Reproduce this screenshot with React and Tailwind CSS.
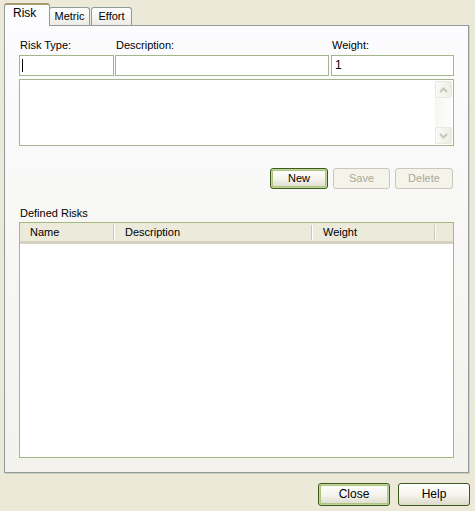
import React from "react";

function Tab({ label, active }) {
  if (active) {
    return (
      <div className="relative z-10 -mb-px flex h-[23px] w-[46px] items-start justify-start rounded-t-[3px] border-x border-t-2 border-x-[#919b9c] border-t-[#a49a6a] bg-[#fcfcfe] pl-[8px] pt-[2px] text-[12px]">
        {label}
      </div>
    );
  }
  return (
    <div className="flex h-[18px] w-[41px] items-center justify-center rounded-t-[3px] border-x border-t border-[#919b9c] bg-gradient-to-b from-[#ffffff] to-[#ecebe6] pb-px">
      {label}
    </div>
  );
}

function Button({ children, isDefault, disabled, className = "" }) {
  if (disabled) {
    return (
      <div
        className={`flex h-[21px] items-center justify-center rounded-[3px] border border-[#cac8bb] bg-[#f5f4ea] text-[#aca899] ${className}`}
      >
        {children}
      </div>
    );
  }
  return (
    <div
      className={`flex items-center justify-center rounded-[3px] border border-[#3d5a1e] bg-gradient-to-b from-[#ffffff] via-[#f6f5ee] to-[#dcd9cb] ${
        isDefault ? "shadow-[inset_0_0_0_1px_#c2d59a,inset_0_0_0_2px_#b0c482]" : ""
      } ${className}`}
    >
      {children}
    </div>
  );
}

function ScrollArrow({ up }) {
  return (
    <div className="flex h-[17px] w-[17px] items-center justify-center rounded-[2px] border border-[#ebe9df] bg-gradient-to-r from-[#fafaf7] to-[#eeede5]">
      <svg width="9" height="6" viewBox="0 0 9 6">
        <path
          d={up ? "M1 5 L4.5 1.5 L8 5" : "M1 1 L4.5 4.5 L8 1"}
          fill="none"
          stroke="#c9c7ba"
          strokeWidth="2"
        />
      </svg>
    </div>
  );
}

function HeaderCell({ label, width, divider = true }) {
  return (
    <div className="flex h-full items-center" style={{ width }}>
      <span className="flex-1 pl-[10px]">{label}</span>
      {divider && (
        <span className="h-[15px] w-[2px] border-l border-r border-l-[#cbc7b8] border-r-[#ffffff]" />
      )}
    </div>
  );
}

export default function App() {
  return (
    <div className="flex h-[511px] w-[475px] flex-col bg-[#ece9d8] font-['Tahoma','Liberation_Sans',sans-serif] text-[11px] leading-[13px] text-black">
      <div className="flex h-[25px] items-end pl-[4px]">
        <Tab label="Risk" active />
        <div className="-ml-px" />
        <Tab label="Metric" />
        <div className="ml-px" />
        <Tab label="Effort" />
      </div>

      <div className="ml-[4px] flex h-[448px] w-[465px] flex-col border border-[#919b9c] bg-gradient-to-b from-[#fcfcfe] to-[#f3f2ec] pl-[14px] shadow-[1px_1px_0_#d2cfc0]">
        <div className="mt-[13px] flex h-[16px]">
          <div className="w-[96px] pl-[1px]">Risk Type:</div>
          <div className="w-[216px] pl-[1px]">Description:</div>
          <div className="pl-[1px]">Weight:</div>
        </div>

        <div className="flex h-[21px]">
          <div className="flex h-full w-[95px] items-center border border-[#a4b58d] bg-white pl-[2px]">
            <span className="h-[13px] w-px bg-black" />
          </div>
          <div className="ml-px h-full w-[214px] border border-[#a4b58d] bg-white" />
          <div className="ml-[2px] flex h-full w-[123px] items-center border border-[#a4b58d] bg-white pl-[3px] text-[12px]">
            1
          </div>
        </div>

        <div className="mt-[3px] flex h-[67px] w-[435px] justify-end border border-[#a4b58d] bg-white p-px">
          <div className="flex w-[17px] flex-col justify-between bg-gradient-to-r from-[#f7f6f1] to-[#fdfdfb]">
            <ScrollArrow up />
            <ScrollArrow />
          </div>
        </div>

        <div className="mt-[22px] flex w-[434px] justify-end gap-[5px]">
          <Button isDefault className="h-[21px] w-[58px]">
            New
          </Button>
          <Button disabled className="w-[57px]">
            Save
          </Button>
          <Button disabled className="w-[58px]">
            Delete
          </Button>
        </div>

        <div className="mt-[18px] h-[14px] pl-px">Defined Risks</div>

        <div className="mt-px flex h-[236px] w-[435px] flex-col border border-[#a4b97f] bg-white">
          <div className="flex h-[21px] items-center border-b-[3px] border-b-[#d6d2c2] bg-[#ebeadb] text-[11px]">
            <HeaderCell label="Name" width={95} />
            <HeaderCell label="Description" width={198} />
            <HeaderCell label="Weight" width={123} />
          </div>
        </div>
      </div>

      <div className="mt-[10px] flex justify-end gap-[8px] pr-[5px]">
        <Button isDefault className="h-[23px] w-[72px] text-[12px]">
          Close
        </Button>
        <Button className="h-[23px] w-[72px] text-[12px]">Help</Button>
      </div>
    </div>
  );
}
